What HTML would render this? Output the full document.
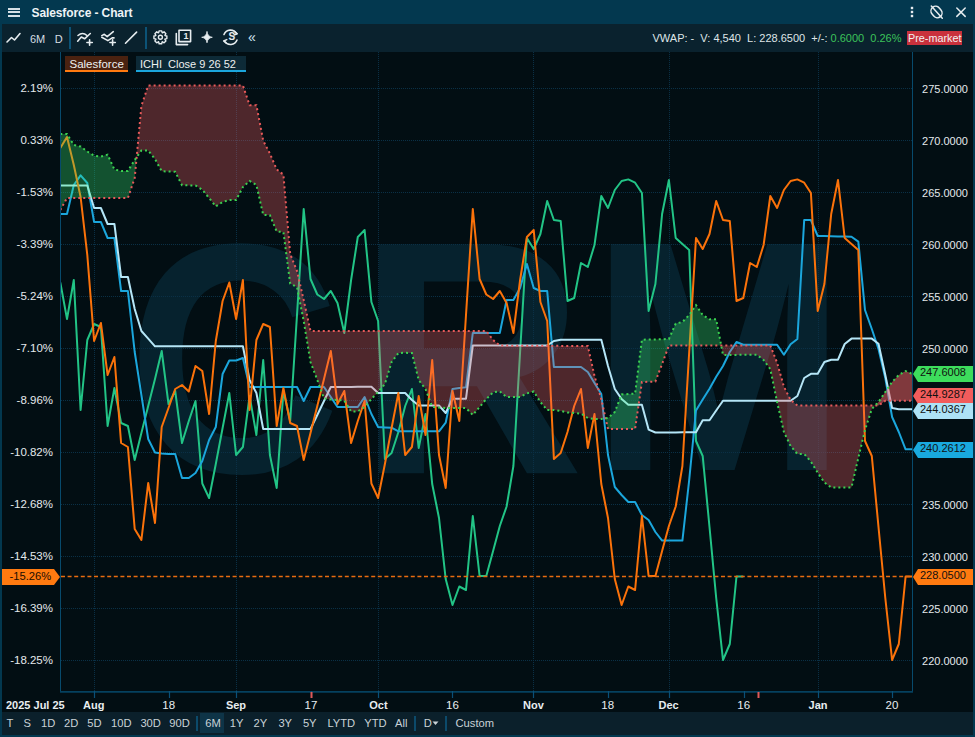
<!DOCTYPE html>
<html><head><meta charset="utf-8">
<style>
*{margin:0;padding:0;box-sizing:border-box}
html,body{width:975px;height:737px;overflow:hidden;background:#03384f;font-family:"Liberation Sans",sans-serif;position:relative}
.abs{position:absolute;white-space:nowrap}
#title{position:absolute;left:0;top:0;width:975px;height:24px;background:#03384f;color:#eef3f6}
#title .t{position:absolute;left:31.5px;top:5.5px;font-size:12px;font-weight:bold;letter-spacing:-0.1px}
#tb{position:absolute;left:2px;top:24px;width:971px;height:28px;background:#0a222e;color:#d5dde2;font-size:11.5px}
#bb{position:absolute;left:2px;top:712px;width:971px;height:23px;background:#0b202b;color:#c9d2d7;font-size:11.2px}
#svg{position:absolute;left:0;top:0}
.dl{position:absolute;top:699px;width:60px;text-align:center;font-size:11px;font-weight:bold;color:#e8edf0}
.ll{position:absolute;left:0;width:53px;text-align:right;font-size:11.5px;color:#e4e9ec}
.rl{position:absolute;left:922px;font-size:11.6px;color:#e4e9ec;transform:scaleX(0.95);transform-origin:0 0}
.vl{position:absolute;left:920px;font-size:11px;color:#111}
.bi{position:absolute;top:5px}
</style></head><body>
<div id="title">
  <div class="abs" style="left:8px;top:8px;width:12px;height:2px;background:#d5e0e6"></div>
  <div class="abs" style="left:8px;top:11px;width:12px;height:2px;background:#d5e0e6"></div>
  <div class="abs" style="left:8px;top:15px;width:12px;height:2px;background:#d5e0e6"></div>
  <div class="t">Salesforce - Chart</div>
</div>
<div id="tb">
<svg class="abs" style="left:-2px;top:-24px" width="280" height="52" fill="none" stroke="#e6ecef" stroke-width="1.6" stroke-linecap="round" stroke-linejoin="round">
  <polyline points="7,42 11.5,37.5 14.5,40 20,33.5"/>
  <path d="M78,35.5 Q82.5,31.5 87,35.5"/><polyline points="77.7,41.2 81.3,37 84.6,38.8 90.3,33.5"/>
  <path d="M89.6,39.8 V45.2 M86.9,42.5 H92.3"/>
  <polyline points="101.8,35.6 104.3,34.3 107.2,36.6 113.3,31.7"/><polyline points="101.8,37.3 107.9,40.6 112.2,37.9 114,37.9"/>
  <path d="M112.6,39.8 V45.2 M109.9,42.5 H115.3"/>
  <path d="M125.5,43.2 L136.6,32.1"/>
  
  <path d="M176.3,33.5 V44.6 H187.6"/>
  <rect x="179" y="30.2" width="11.6" height="11.4"/>
  <path d="M207,31.8 Q207.6,36.7 212.3,37.3 Q207.6,37.9 207,42.8 Q206.4,37.9 201.7,37.3 Q206.4,36.7 207,31.8Z" fill="#e6ecef" stroke-width="0.8"/>
  <path d="M224,34.5 A7,7 0 0 1 236.5,33.5 M237,40 A7,7 0 0 1 224.5,41.2"/>
  <path d="M234.5,31.5 L237.3,33.8 L234,35" stroke-width="1.4"/><path d="M226.3,43.3 L223.6,41 L226.8,39.6" stroke-width="1.4"/>
</svg>
<svg class="abs" style="left:147px;top:2px" width="24" height="24" fill="none" stroke="#e6ecef" stroke-width="1.4" stroke-linejoin="round"><path d="M15.99,9.57 L17.87,9.99 L17.87,12.61 L15.99,13.03 L15.86,13.32 L16.90,14.95 L15.05,16.80 L13.42,15.76 L13.13,15.89 L12.71,17.77 L10.09,17.77 L9.67,15.89 L9.38,15.76 L7.75,16.80 L5.90,14.95 L6.94,13.32 L6.81,13.03 L4.93,12.61 L4.93,9.99 L6.81,9.57 L6.94,9.28 L5.90,7.65 L7.75,5.80 L9.38,6.84 L9.67,6.71 L10.09,4.83 L12.71,4.83 L13.13,6.71 L13.42,6.84 L15.05,5.80 L16.90,7.65 L15.86,9.28Z"/><circle cx="11.4" cy="11.3" r="2"/></svg>
<div class="abs" style="left:181.5px;top:7px;font-size:9px;font-weight:bold;color:#e6ecef">1</div>
<div class="abs" style="left:226.5px;top:6.5px;font-size:10px;font-weight:bold;color:#e6ecef">S</div>
<div class="abs" style="left:246px;top:5px;font-size:14px;color:#cfe3f0">&#171;</div>
<div class="abs" style="left:28px;top:8.5px;font-size:11px">6M</div>
<div class="abs" style="left:52.8px;top:8.5px;font-size:11px">D</div>
<div class="abs" style="left:67px;top:3px;width:2px;height:22px;background:#0c5377"></div>
<div class="abs" style="left:142.8px;top:3px;width:2px;height:22px;background:#0c5377"></div>
<div class="abs" style="left:650.5px;top:8px;font-size:11px;color:#dfe5e8">VWAP: -&nbsp; V: 4,540&nbsp; L: 228.6500&nbsp; +/-: <span style="color:#3cc35a">0.6000&nbsp; 0.26%</span></div>
<div class="abs" style="left:905px;top:7px;width:55px;height:13.5px;background:#c9313c"></div>
<div class="abs" style="left:906px;top:8px;font-size:10.8px;color:#f2f2f2">Pre-market</div>
</div>
<svg id="svg" width="975" height="737">
<rect x="2" y="52" width="971" height="660" fill="#020e13"/>
<g font-family="Liberation Sans" font-weight="bold" font-size="326" fill="#06222e"><text x="100" y="476" transform="matrix(0.9057,0,0,1.004,36.66,-6.0)">C</text><text x="400" y="476" transform="matrix(0.961,0,0,1.021,-26.5,-12.7)">R</text><text x="650" y="476" transform="matrix(0.947,0,0,1.008,-25.4,-9.8)">M</text></g>
<line x1="61" y1="88.5" x2="912" y2="88.5" stroke="#0a3046" stroke-width="1" stroke-dasharray="1,1"/>
<line x1="61" y1="140.5" x2="912" y2="140.5" stroke="#0a3046" stroke-width="1" stroke-dasharray="1,1"/>
<line x1="61" y1="192.5" x2="912" y2="192.5" stroke="#0a3046" stroke-width="1" stroke-dasharray="1,1"/>
<line x1="61" y1="244.5" x2="912" y2="244.5" stroke="#0a3046" stroke-width="1" stroke-dasharray="1,1"/>
<line x1="61" y1="296.5" x2="912" y2="296.5" stroke="#0a3046" stroke-width="1" stroke-dasharray="1,1"/>
<line x1="61" y1="348.5" x2="912" y2="348.5" stroke="#0a3046" stroke-width="1" stroke-dasharray="1,1"/>
<line x1="61" y1="400.5" x2="912" y2="400.5" stroke="#0a3046" stroke-width="1" stroke-dasharray="1,1"/>
<line x1="61" y1="452.5" x2="912" y2="452.5" stroke="#0a3046" stroke-width="1" stroke-dasharray="1,1"/>
<line x1="61" y1="504.5" x2="912" y2="504.5" stroke="#0a3046" stroke-width="1" stroke-dasharray="1,1"/>
<line x1="61" y1="556.5" x2="912" y2="556.5" stroke="#0a3046" stroke-width="1" stroke-dasharray="1,1"/>
<line x1="61" y1="608.5" x2="912" y2="608.5" stroke="#0a3046" stroke-width="1" stroke-dasharray="1,1"/>
<line x1="61" y1="660.5" x2="912" y2="660.5" stroke="#0a3046" stroke-width="1" stroke-dasharray="1,1"/>
<line x1="94.5" y1="52" x2="94.5" y2="691" stroke="#0a3046" stroke-width="1" stroke-dasharray="1,1"/>
<line x1="236.5" y1="52" x2="236.5" y2="691" stroke="#0a3046" stroke-width="1" stroke-dasharray="1,1"/>
<line x1="378.5" y1="52" x2="378.5" y2="691" stroke="#0a3046" stroke-width="1" stroke-dasharray="1,1"/>
<line x1="533.5" y1="52" x2="533.5" y2="691" stroke="#0a3046" stroke-width="1" stroke-dasharray="1,1"/>
<line x1="669.5" y1="52" x2="669.5" y2="691" stroke="#0a3046" stroke-width="1" stroke-dasharray="1,1"/>
<line x1="818.5" y1="52" x2="818.5" y2="691" stroke="#0a3046" stroke-width="1" stroke-dasharray="1,1"/>
<defs><clipPath id="pc"><rect x="61" y="52" width="851" height="639"/></clipPath></defs>
<g clip-path="url(#pc)" fill="none" stroke-linejoin="round" stroke-width="2">
<polyline points="60.3,282.5 67.0,319.0 73.8,280.0 80.6,410.0 87.3,340.0 94.1,324.0 100.9,327.0 107.6,426.0 114.4,388.0 121.1,423.0 127.9,426.0 134.7,460.0 141.4,433.0 148.2,406.0 155.0,379.0 161.7,351.0 168.5,404.0 175.2,391.0 182.0,443.0 188.8,421.0 195.5,401.0 202.3,483.5 209.1,498.0 215.8,464.0 222.6,428.0 229.3,393.0 236.1,455.0 242.9,447.0 249.6,396.0 256.4,435.0 263.2,360.0 269.9,455.0 276.7,488.0 283.4,391.0 290.2,421.0 297.0,315.0 303.7,209.0 310.5,279.0 317.3,294.5 324.0,299.0 330.8,291.0 337.5,303.0 344.3,333.0 351.1,280.0 357.8,237.0 364.6,230.0 371.4,302.0 378.1,321.0 384.9,459.0 391.6,453.0 398.4,432.0 405.2,406.0 411.9,389.0 418.7,448.0 425.5,414.0 432.2,484.0 439.0,518.0 445.7,579.0 452.5,605.0 459.3,586.5 466.0,590.0 472.8,516.0 479.6,576.0 486.3,576.0 493.1,551.0 499.8,526.0 506.6,506.5 513.4,466.0 520.1,352.0 526.9,238.0 533.7,249.0 540.4,234.0 547.2,201.0 553.9,220.0 560.7,221.0 567.5,301.0 574.2,298.0 581.0,263.0 587.8,267.0 594.5,245.0 601.3,196.0 608.0,208.0 614.8,190.0 621.6,181.0 628.3,179.4 635.1,182.7 641.9,193.0 648.6,311.0 655.4,284.0 662.1,214.0 668.9,180.0 675.7,238.0 682.4,244.0 689.2,250.0 696.0,441.0 702.7,456.0 709.5,527.0 716.2,598.0 723.0,660.0 729.8,644.0 736.5,576.5 743.3,576.5" stroke="#22c486"/>
<polyline points="60.3,214.0 67.0,214.0 73.8,185.0 80.6,175.4 87.3,183.0 94.1,222.0 100.9,222.0 107.6,238.0 114.4,238.0 121.1,291.0 127.9,291.0 134.7,352.0 141.4,395.0 148.2,439.0 155.0,452.5 161.7,453.5 168.5,454.0 175.2,454.0 182.0,478.0 188.8,478.0 195.5,473.0 202.3,461.0 209.1,440.0 215.8,427.0 222.6,374.0 229.3,360.5 236.1,360.5 242.9,358.0 249.6,387.0 256.4,387.0 263.2,387.0 269.9,387.0 276.7,387.0 283.4,387.0 290.2,387.0 297.0,387.0 303.7,401.0 310.5,387.0 317.3,387.0 324.0,387.0 330.8,397.0 337.5,407.0 344.3,407.0 351.1,407.0 357.8,407.0 364.6,397.0 371.4,414.0 378.1,427.0 384.9,427.4 391.6,427.7 398.4,431.3 405.2,431.3 411.9,431.3 418.7,431.3 425.5,431.3 432.2,431.3 439.0,431.3 445.7,422.7 452.5,389.0 459.3,388.0 466.0,387.3 472.8,333.0 479.6,333.0 486.3,333.0 493.1,333.0 499.8,333.0 506.6,300.0 513.4,300.0 520.1,288.0 526.9,264.0 533.7,288.0 540.4,291.0 547.2,291.0 553.9,367.0 560.7,367.0 567.5,367.0 574.2,367.0 581.0,367.0 587.8,372.0 594.5,383.0 601.3,394.0 608.0,455.0 614.8,487.0 621.6,495.0 628.3,502.0 635.1,502.0 641.9,515.0 648.6,520.0 655.4,532.0 662.1,540.6 668.9,540.6 675.7,540.6 682.4,540.6 689.2,480.0 696.0,410.5 702.7,399.6 709.5,388.8 716.2,376.8 723.0,366.0 729.8,352.0 736.5,342.0 743.3,344.7 750.1,344.7 756.8,344.7 763.6,344.7 770.3,344.7 777.1,344.7 783.9,354.7 790.6,344.3 797.4,339.0 804.2,220.0 810.9,220.0 817.7,236.0 824.4,236.1 831.2,236.3 838.0,236.4 844.7,236.6 851.5,236.7 858.3,241.6 865.0,310.0 871.8,329.0 878.5,349.0 885.3,378.0 892.1,417.0 898.8,432.0 905.6,449.3 912.4,449.3" stroke="#1ba6dc"/>
<polyline points="60.3,185.5 67.0,185.5 73.8,185.5 80.6,185.5 87.3,185.5 94.1,208.0 100.9,208.0 107.6,224.0 114.4,224.0 121.1,277.0 127.9,277.0 134.7,309.0 141.4,331.0 148.2,338.6 155.0,346.3 161.7,346.3 168.5,346.3 175.2,346.3 182.0,346.3 188.8,346.3 195.5,346.3 202.3,346.3 209.1,346.3 215.8,346.3 222.6,346.3 229.3,346.3 236.1,346.3 242.9,346.3 249.6,380.0 256.4,393.0 263.2,429.0 269.9,429.0 276.7,429.0 283.4,429.0 290.2,429.0 297.0,429.0 303.7,429.0 310.5,429.0 317.3,415.0 324.0,401.0 330.8,387.0 337.5,386.9 344.3,386.9 351.1,386.9 357.8,386.8 364.6,386.8 371.4,386.7 378.1,393.0 384.9,393.0 391.6,393.0 398.4,393.0 405.2,393.0 411.9,400.0 418.7,405.5 425.5,405.5 432.2,405.5 439.0,405.5 445.7,413.0 452.5,398.7 459.3,398.7 466.0,398.7 472.8,345.5 479.6,345.5 486.3,345.5 493.1,345.5 499.8,345.5 506.6,345.5 513.4,345.5 520.1,345.5 526.9,345.5 533.7,345.5 540.4,345.5 547.2,345.5 553.9,341.0 560.7,339.7 567.5,339.7 574.2,339.7 581.0,339.7 587.8,339.7 594.5,339.7 601.3,339.7 608.0,366.0 614.8,389.0 621.6,399.0 628.3,404.7 635.1,404.7 641.9,404.7 648.6,429.6 655.4,432.5 662.1,432.4 668.9,432.4 675.7,432.4 682.4,432.3 689.2,432.2 696.0,432.2 702.7,420.3 709.5,420.3 716.2,410.5 723.0,400.7 729.8,400.7 736.5,400.7 743.3,400.7 750.1,400.7 756.8,400.7 763.6,400.7 770.3,400.7 777.1,400.7 783.9,400.7 790.6,400.7 797.4,396.0 804.2,378.0 810.9,373.8 817.7,373.8 824.4,362.0 831.2,359.7 838.0,359.7 844.7,344.0 851.5,338.6 858.3,338.6 865.0,338.6 871.8,338.6 878.5,343.8 885.3,375.0 892.1,408.0 898.8,409.3 905.6,409.3 912.4,409.3" stroke="#b5e6f7"/>
<polyline points="60.3,148.0 67.0,137.0 73.8,165.0 80.6,197.0 87.3,255.0 94.1,341.0 100.9,323.0 107.6,375.0 114.4,357.0 121.1,443.0 127.9,447.0 134.7,529.0 141.4,540.0 148.2,483.0 155.0,523.0 161.7,427.0 168.5,408.0 175.2,389.0 182.0,385.0 188.8,391.5 195.5,366.0 202.3,371.0 209.1,414.0 215.8,341.0 222.6,301.0 229.3,282.5 236.1,319.0 242.9,280.0 249.6,410.0 256.4,340.0 263.2,324.0 269.9,327.0 276.7,426.0 283.4,388.0 290.2,423.0 297.0,426.0 303.7,460.0 310.5,433.0 317.3,406.0 324.0,379.0 330.8,351.0 337.5,404.0 344.3,391.0 351.1,443.0 357.8,421.0 364.6,401.0 371.4,483.5 378.1,498.0 384.9,464.0 391.6,428.0 398.4,393.0 405.2,455.0 411.9,447.0 418.7,396.0 425.5,435.0 432.2,360.0 439.0,455.0 445.7,488.0 452.5,391.0 459.3,421.0 466.0,315.0 472.8,209.0 479.6,279.0 486.3,294.5 493.1,299.0 499.8,291.0 506.6,303.0 513.4,333.0 520.1,280.0 526.9,237.0 533.7,230.0 540.4,302.0 547.2,321.0 553.9,459.0 560.7,453.0 567.5,432.0 574.2,406.0 581.0,389.0 587.8,448.0 594.5,414.0 601.3,484.0 608.0,518.0 614.8,579.0 621.6,605.0 628.3,586.5 635.1,590.0 641.9,516.0 648.6,576.0 655.4,576.0 662.1,551.0 668.9,526.0 675.7,506.5 682.4,466.0 689.2,352.0 696.0,238.0 702.7,249.0 709.5,234.0 716.2,201.0 723.0,220.0 729.8,221.0 736.5,301.0 743.3,298.0 750.1,263.0 756.8,267.0 763.6,245.0 770.3,196.0 777.1,208.0 783.9,190.0 790.6,181.0 797.4,179.4 804.2,182.7 810.9,193.0 817.7,311.0 824.4,284.0 831.2,214.0 838.0,180.0 844.7,238.0 851.5,244.0 858.3,250.0 865.0,441.0 871.8,456.0 878.5,527.0 885.3,598.0 892.1,660.0 898.8,644.0 905.6,576.5 912.4,576.5" stroke="#fb720a"/>
</g>
<g clip-path="url(#pc)">
<polygon points="60.3,134.0 67.0,134.0 73.8,145.0 80.6,146.5 87.3,151.5 94.1,155.7 100.9,156.6 107.6,154.6 114.4,169.5 121.1,171.0 127.9,171.0 134.7,160.0 136.6,157.3 136.6,157.3 134.7,178.0 127.9,198.0 121.1,198.0 114.4,198.0 107.6,198.0 100.9,198.0 94.1,198.0 87.3,198.0 80.6,198.0 73.8,198.0 67.0,198.0 60.3,210.0" fill="#3cf275" fill-opacity="0.3" stroke="none"/>
<polygon points="136.6,157.3 141.4,150.5 148.2,150.5 155.0,159.0 161.7,171.3 168.5,171.5 175.2,171.8 182.0,185.2 188.8,185.4 195.5,185.4 202.3,189.8 209.1,198.0 215.8,206.4 222.6,202.0 229.3,200.0 236.1,200.0 242.9,187.0 249.6,181.0 256.4,185.0 263.2,214.8 269.9,215.2 276.7,231.5 283.4,232.0 290.2,283.6 297.0,287.0 303.7,321.0 310.5,362.0 317.3,380.0 324.0,398.4 330.8,399.5 337.5,400.0 344.3,400.6 351.1,411.4 357.8,411.4 364.6,407.0 371.4,399.0 378.1,392.0 384.9,384.0 391.6,362.0 398.4,353.0 405.2,352.8 411.9,353.0 418.7,380.0 425.5,389.0 432.2,406.8 439.0,407.5 445.7,408.0 452.5,408.0 459.3,408.0 466.0,408.0 472.8,415.0 479.6,407.0 486.3,399.0 493.1,392.3 499.8,391.5 506.6,397.0 513.4,397.0 520.1,397.0 526.9,393.4 533.7,391.5 540.4,402.0 547.2,410.0 553.9,410.0 560.7,411.0 567.5,412.5 574.2,413.0 581.0,413.6 587.8,418.0 594.5,419.0 601.3,419.0 605.6,418.4 605.6,418.4 601.3,399.0 594.5,376.0 587.8,346.0 581.0,346.0 574.2,345.9 567.5,345.9 560.7,345.9 553.9,345.8 547.2,345.8 540.4,345.8 533.7,345.8 526.9,345.7 520.1,345.7 513.4,345.7 506.6,345.6 499.8,345.6 493.1,340.0 486.3,331.0 479.6,331.0 472.8,331.0 466.0,331.0 459.3,331.0 452.5,331.0 445.7,331.0 439.0,331.0 432.2,331.0 425.5,331.0 418.7,331.0 411.9,331.0 405.2,331.0 398.4,331.0 391.6,331.0 384.9,331.0 378.1,331.0 371.4,331.0 364.6,331.0 357.8,331.0 351.1,331.0 344.3,331.0 337.5,331.0 330.8,331.0 324.0,331.0 317.3,331.0 310.5,331.0 303.7,300.0 297.0,271.0 290.2,254.0 283.4,174.6 276.7,169.4 269.9,153.6 263.2,140.6 256.4,105.2 249.6,105.2 242.9,85.5 236.1,85.5 229.3,85.5 222.6,85.5 215.8,85.5 209.1,85.5 202.3,85.5 195.5,85.5 188.8,85.6 182.0,85.6 175.2,85.6 168.5,85.6 161.7,85.6 155.0,85.6 148.2,85.6 141.4,106.0 136.6,157.3" fill="#fe6368" fill-opacity="0.3" stroke="none"/>
<polygon points="605.6,418.4 608.0,418.0 614.8,412.0 621.6,394.5 628.3,394.0 635.1,393.7 641.9,339.7 648.6,339.5 655.4,339.4 662.1,339.2 668.9,339.0 675.7,323.6 682.4,322.0 689.2,315.0 696.0,305.2 702.7,315.0 709.5,319.3 716.2,319.3 721.2,345.5 721.2,345.5 716.2,345.5 709.5,345.5 702.7,345.5 696.0,345.5 689.2,345.5 682.4,345.5 675.7,345.5 668.9,345.5 662.1,364.0 655.4,381.5 648.6,381.8 641.9,382.0 635.1,429.0 628.3,429.0 621.6,429.0 614.8,429.0 608.0,429.0 605.6,418.4" fill="#3cf275" fill-opacity="0.3" stroke="none"/>
<polygon points="721.2,345.5 723.0,355.0 729.8,354.9 736.5,354.9 743.3,354.8 750.1,354.8 756.8,354.7 763.6,360.0 770.3,369.0 777.1,402.0 783.9,432.0 790.6,446.0 797.4,454.0 804.2,454.0 810.9,461.6 817.7,472.6 824.4,482.5 831.2,487.4 838.0,487.4 844.7,487.4 851.5,487.4 858.3,458.0 865.0,430.0 871.8,409.0 875.2,405.5 875.2,405.5 871.8,405.5 865.0,405.5 858.3,405.5 851.5,405.5 844.7,405.5 838.0,405.5 831.2,405.5 824.4,405.5 817.7,405.5 810.9,405.5 804.2,405.5 797.4,405.5 790.6,400.0 783.9,386.6 777.1,362.7 770.3,345.5 763.6,345.5 756.8,345.5 750.1,345.5 743.3,345.5 736.5,345.5 729.8,345.5 723.0,345.5 721.2,345.5" fill="#fe6368" fill-opacity="0.3" stroke="none"/>
<polygon points="875.2,405.5 878.5,402.0 885.3,392.0 892.1,382.0 898.8,375.0 905.6,371.0 912.4,374.0 912.4,400.8 905.6,400.8 898.8,400.8 892.1,400.8 885.3,400.8 878.5,405.5 875.2,405.5" fill="#fe6368" fill-opacity="0.5" stroke="none"/>
<polyline points="60.3,210.0 67.0,198.0 73.8,198.0 80.6,198.0 87.3,198.0 94.1,198.0 100.9,198.0 107.6,198.0 114.4,198.0 121.1,198.0 127.9,198.0 134.7,178.0 141.4,106.0 148.2,85.6 155.0,85.6 161.7,85.6 168.5,85.6 175.2,85.6 182.0,85.6 188.8,85.6 195.5,85.5 202.3,85.5 209.1,85.5 215.8,85.5 222.6,85.5 229.3,85.5 236.1,85.5 242.9,85.5 249.6,105.2 256.4,105.2 263.2,140.6 269.9,153.6 276.7,169.4 283.4,174.6 290.2,254.0 297.0,271.0 303.7,300.0 310.5,331.0 317.3,331.0 324.0,331.0 330.8,331.0 337.5,331.0 344.3,331.0 351.1,331.0 357.8,331.0 364.6,331.0 371.4,331.0 378.1,331.0 384.9,331.0 391.6,331.0 398.4,331.0 405.2,331.0 411.9,331.0 418.7,331.0 425.5,331.0 432.2,331.0 439.0,331.0 445.7,331.0 452.5,331.0 459.3,331.0 466.0,331.0 472.8,331.0 479.6,331.0 486.3,331.0 493.1,340.0 499.8,345.6 506.6,345.6 513.4,345.7 520.1,345.7 526.9,345.7 533.7,345.8 540.4,345.8 547.2,345.8 553.9,345.8 560.7,345.9 567.5,345.9 574.2,345.9 581.0,346.0 587.8,346.0 594.5,376.0 601.3,399.0 608.0,429.0 614.8,429.0 621.6,429.0 628.3,429.0 635.1,429.0 641.9,382.0 648.6,381.8 655.4,381.5 662.1,364.0 668.9,345.5 675.7,345.5 682.4,345.5 689.2,345.5 696.0,345.5 702.7,345.5 709.5,345.5 716.2,345.5 723.0,345.5 729.8,345.5 736.5,345.5 743.3,345.5 750.1,345.5 756.8,345.5 763.6,345.5 770.3,345.5 777.1,362.7 783.9,386.6 790.6,400.0 797.4,405.5 804.2,405.5 810.9,405.5 817.7,405.5 824.4,405.5 831.2,405.5 838.0,405.5 844.7,405.5 851.5,405.5 858.3,405.5 865.0,405.5 871.8,405.5 878.5,405.5 885.3,400.8 892.1,400.8 898.8,400.8 905.6,400.8 912.4,400.8" fill="none" stroke="#e85a5a" stroke-width="2" stroke-dasharray="2,3"/>
<polyline points="60.3,134.0 67.0,134.0 73.8,145.0 80.6,146.5 87.3,151.5 94.1,155.7 100.9,156.6 107.6,154.6 114.4,169.5 121.1,171.0 127.9,171.0 134.7,160.0 141.4,150.5 148.2,150.5 155.0,159.0 161.7,171.3 168.5,171.5 175.2,171.8 182.0,185.2 188.8,185.4 195.5,185.4 202.3,189.8 209.1,198.0 215.8,206.4 222.6,202.0 229.3,200.0 236.1,200.0 242.9,187.0 249.6,181.0 256.4,185.0 263.2,214.8 269.9,215.2 276.7,231.5 283.4,232.0 290.2,283.6 297.0,287.0 303.7,321.0 310.5,362.0 317.3,380.0 324.0,398.4 330.8,399.5 337.5,400.0 344.3,400.6 351.1,411.4 357.8,411.4 364.6,407.0 371.4,399.0 378.1,392.0 384.9,384.0 391.6,362.0 398.4,353.0 405.2,352.8 411.9,353.0 418.7,380.0 425.5,389.0 432.2,406.8 439.0,407.5 445.7,408.0 452.5,408.0 459.3,408.0 466.0,408.0 472.8,415.0 479.6,407.0 486.3,399.0 493.1,392.3 499.8,391.5 506.6,397.0 513.4,397.0 520.1,397.0 526.9,393.4 533.7,391.5 540.4,402.0 547.2,410.0 553.9,410.0 560.7,411.0 567.5,412.5 574.2,413.0 581.0,413.6 587.8,418.0 594.5,419.0 601.3,419.0 608.0,418.0 614.8,412.0 621.6,394.5 628.3,394.0 635.1,393.7 641.9,339.7 648.6,339.5 655.4,339.4 662.1,339.2 668.9,339.0 675.7,323.6 682.4,322.0 689.2,315.0 696.0,305.2 702.7,315.0 709.5,319.3 716.2,319.3 723.0,355.0 729.8,354.9 736.5,354.9 743.3,354.8 750.1,354.8 756.8,354.7 763.6,360.0 770.3,369.0 777.1,402.0 783.9,432.0 790.6,446.0 797.4,454.0 804.2,454.0 810.9,461.6 817.7,472.6 824.4,482.5 831.2,487.4 838.0,487.4 844.7,487.4 851.5,487.4 858.3,458.0 865.0,430.0 871.8,409.0 878.5,402.0 885.3,392.0 892.1,382.0 898.8,375.0 905.6,371.0 912.4,374.0" fill="none" stroke="#3ad150" stroke-width="2" stroke-dasharray="2,3"/>
</g>
<line x1="61" y1="576.5" x2="912" y2="576.5" stroke="#e86c10" stroke-width="1.6" stroke-dasharray="4,2.6"/>
<path d="M60.5,52 V691 M912.5,52 V691" fill="none" stroke="#074a6c" stroke-width="1"/><line x1="60" y1="691.9" x2="913" y2="691.9" stroke="#05415f" stroke-width="1.8"/>
<line x1="94.5" y1="691" x2="94.5" y2="698" stroke="#0a5078" stroke-width="1.2"/>
<line x1="169.5" y1="691" x2="169.5" y2="698" stroke="#0a5078" stroke-width="1.2"/>
<line x1="236.5" y1="691" x2="236.5" y2="698" stroke="#0a5078" stroke-width="1.2"/>
<line x1="311.5" y1="691" x2="311.5" y2="698" stroke="#0a5078" stroke-width="1.2"/>
<line x1="378.5" y1="691" x2="378.5" y2="698" stroke="#0a5078" stroke-width="1.2"/>
<line x1="452.5" y1="691" x2="452.5" y2="698" stroke="#0a5078" stroke-width="1.2"/>
<line x1="533.5" y1="691" x2="533.5" y2="698" stroke="#0a5078" stroke-width="1.2"/>
<line x1="608.5" y1="691" x2="608.5" y2="698" stroke="#0a5078" stroke-width="1.2"/>
<line x1="669.5" y1="691" x2="669.5" y2="698" stroke="#0a5078" stroke-width="1.2"/>
<line x1="744.5" y1="691" x2="744.5" y2="698" stroke="#0a5078" stroke-width="1.2"/>
<line x1="818.5" y1="691" x2="818.5" y2="698" stroke="#0a5078" stroke-width="1.2"/>
<line x1="892.5" y1="691" x2="892.5" y2="698" stroke="#0a5078" stroke-width="1.2"/>
<line x1="311.5" y1="692" x2="311.5" y2="698" stroke="#e05858" stroke-width="2"/>
<line x1="758.5" y1="692" x2="758.5" y2="698" stroke="#e05858" stroke-width="2"/>
</svg>
<div class="dl" style="left:63.8px;">Aug</div>
<div class="dl" style="left:138.7px;font-weight:normal;font-size:11.5px;top:698.5px">18</div>
<div class="dl" style="left:206.0px;">Sep</div>
<div class="dl" style="left:280.9px;font-weight:normal;font-size:11.5px;top:698.5px">17</div>
<div class="dl" style="left:348.4px;">Oct</div>
<div class="dl" style="left:422.4px;font-weight:normal;font-size:11.5px;top:698.5px">16</div>
<div class="dl" style="left:503.4px;">Nov</div>
<div class="dl" style="left:577.7px;font-weight:normal;font-size:11.5px;top:698.5px">18</div>
<div class="dl" style="left:638.6px;">Dec</div>
<div class="dl" style="left:713.7px;font-weight:normal;font-size:11.5px;top:698.5px">16</div>
<div class="dl" style="left:788.0px;">Jan</div>
<div class="dl" style="left:861.9px;font-weight:normal;font-size:11.5px;top:698.5px">20</div>
<div class="dl" style="left:6px;width:auto;text-align:left">2025 Jul 25</div>
<div class="ll" style="top:82px">2.19%</div>
<div class="rl" style="top:81.7px">275.0000</div>
<div class="ll" style="top:134px">0.33%</div>
<div class="rl" style="top:133.7px">270.0000</div>
<div class="ll" style="top:186px">-1.53%</div>
<div class="rl" style="top:185.7px">265.0000</div>
<div class="ll" style="top:238px">-3.39%</div>
<div class="rl" style="top:237.7px">260.0000</div>
<div class="ll" style="top:290px">-5.24%</div>
<div class="rl" style="top:289.7px">255.0000</div>
<div class="ll" style="top:342px">-7.10%</div>
<div class="rl" style="top:341.7px">250.0000</div>
<div class="ll" style="top:394px">-8.96%</div>
<div class="ll" style="top:446px">-10.82%</div>
<div class="ll" style="top:498px">-12.68%</div>
<div class="rl" style="top:497.7px">235.0000</div>
<div class="ll" style="top:550px">-14.53%</div>
<div class="rl" style="top:549.7px">230.0000</div>
<div class="ll" style="top:602px">-16.39%</div>
<div class="rl" style="top:601.7px">225.0000</div>
<div class="ll" style="top:654px">-18.25%</div>
<div class="rl" style="top:653.7px">220.0000</div>
<svg class="abs" style="left:913px;top:365.5px" width="60" height="16"><path d="M0,8 L5,0 H60 V16 H5 Z" fill="#3ddc5c"/></svg><div class="vl" style="top:366.0px">247.6008</div>
<svg class="abs" style="left:913px;top:387.5px" width="60" height="16"><path d="M0,8 L5,0 H60 V16 H5 Z" fill="#f25c5c"/></svg><div class="vl" style="top:388.0px">244.9287</div>
<svg class="abs" style="left:913px;top:402.5px" width="60" height="16"><path d="M0,8 L5,0 H60 V16 H5 Z" fill="#ade2f6"/></svg><div class="vl" style="top:403.0px">244.0367</div>
<svg class="abs" style="left:913px;top:441.7px" width="60" height="16"><path d="M0,8 L5,0 H60 V16 H5 Z" fill="#19a9de"/></svg><div class="vl" style="top:442.2px">240.2612</div>
<svg class="abs" style="left:913px;top:568.5px" width="60" height="16"><path d="M0,8 L5,0 H60 V16 H5 Z" fill="#ff7a10"/></svg><div class="vl" style="top:569.0px">228.0500</div>
<div id="bb">
<div class="abs" style="left:4.5px;top:5px">T</div>
<div class="abs" style="left:21.5px;top:5px">S</div>
<div class="abs" style="left:39px;top:5px">1D</div>
<div class="abs" style="left:62px;top:5px">2D</div>
<div class="abs" style="left:85.3px;top:5px">5D</div>
<div class="abs" style="left:109px;top:5px">10D</div>
<div class="abs" style="left:138.4px;top:5px">30D</div>
<div class="abs" style="left:167.2px;top:5px">90D</div>
<div class="abs" style="left:194px;top:3.5px;width:2px;height:15px;background:#0c4a6a"></div>
<div class="abs" style="left:198.2px;top:0.5px;width:24px;height:20px;background:#0e3447"></div>
<div class="abs" style="left:203.3px;top:5px">6M</div>
<div class="abs" style="left:227.7px;top:5px">1Y</div>
<div class="abs" style="left:251.6px;top:5px">2Y</div>
<div class="abs" style="left:276.4px;top:5px">3Y</div>
<div class="abs" style="left:300.9px;top:5px">5Y</div>
<div class="abs" style="left:325.4px;top:5px">LYTD</div>
<div class="abs" style="left:362.2px;top:5px">YTD</div>
<div class="abs" style="left:393px;top:5px">All</div>
<div class="abs" style="left:411.8px;top:3.5px;width:2px;height:15px;background:#0c4a6a"></div>
<div class="abs" style="left:421.7px;top:5px">D</div>
<svg class="abs" style="left:430px;top:9px" width="8" height="5"><path d="M0.5,0.5 H6.5 L3.5,4Z" fill="#c9d2d7"/></svg>
<div class="abs" style="left:443px;top:3.5px;width:2px;height:15px;background:#0c4a6a"></div>
<div class="abs" style="left:453.5px;top:5px">Custom</div>
</div>
<div class="abs" style="left:65px;top:56px;width:63px;height:16px;background:#4a2210"></div>
<div class="abs" style="left:65px;top:70px;width:63px;height:2px;background:#ff7a10"></div>
<div class="abs" style="left:69.5px;top:57.5px;font-size:11.5px;color:#eef0f0">Salesforce</div>
<div class="abs" style="left:136px;top:56px;width:110px;height:16px;background:#0d2a37"></div>
<div class="abs" style="left:136px;top:70px;width:110px;height:2px;background:#1ba6dc"></div>
<div class="abs" style="left:140px;top:57.5px;font-size:11px;color:#eef0f0">ICHI&nbsp; Close 9 26 52</div>
<svg class="abs" style="left:2px;top:568.5px" width="59" height="16"><path d="M0,0 H52 L58,8 L52,16 H0Z" fill="#ff7a10"/></svg>
<div class="abs" style="left:9.5px;top:570px;font-size:11.2px;color:#1a0d02">-15.26%</div>
<svg class="abs" style="left:904px;top:0px" width="70" height="24" fill="none" stroke="#e6ecef" stroke-width="1.5" stroke-linecap="round">
  <rect x="6.8" y="6.8" width="2.4" height="2.4" fill="#e6ecef" stroke="none"/><rect x="6.8" y="10.8" width="2.4" height="2.4" fill="#e6ecef" stroke="none"/><rect x="6.8" y="14.8" width="2.4" height="2.4" fill="#e6ecef" stroke="none"/>
  <rect x="27.8" y="6" width="9.4" height="12" rx="4.7" transform="rotate(-40 32.5 12)"/>
  <path d="M27.3,6 L38.3,18.3"/>
  <path d="M52.8,8 L61.2,16.4 M61.2,8 L52.8,16.4"/>
</svg>
</body></html>
